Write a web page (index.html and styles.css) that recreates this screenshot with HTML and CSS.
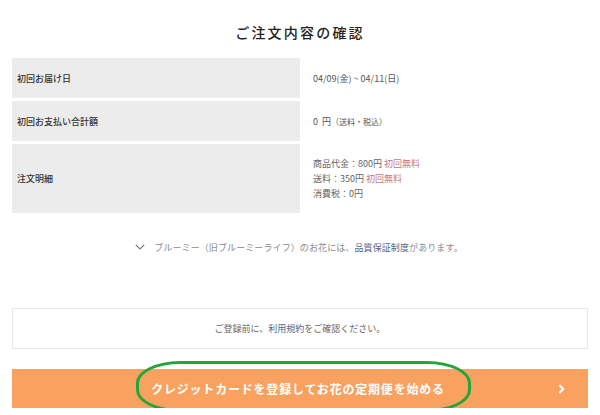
FILE: index.html
```html
<!DOCTYPE html>
<html lang="ja">
<head>
<meta charset="utf-8">
<title>ご注文内容の確認</title>
<link rel="stylesheet" href="styles.css">
</head>
<body>
<main class="page">
  <h1 class="title">ご注文内容の確認</h1>

  <div class="summary">
    <div class="label">初回お届け日</div>
    <div class="value">04/09(金) ~ 04/11(日)</div>

    <div class="label">初回お支払い合計額</div>
    <div class="value">0&nbsp;&nbsp;円<span class="note">（送料・税込）</span></div>

    <div class="label">注文明細</div>
    <div class="value detail">
      <div>商品代金：800円 <span class="free">初回無料</span></div>
      <div>送料：350円 <span class="free">初回無料</span></div>
      <div>消費税：0円</div>
    </div>
  </div>

  <p class="notice">
    <svg class="chev-down" width="10" height="6" viewBox="0 0 10 6" aria-hidden="true"><path d="M0.8 0.8 L5 5 L9.2 0.8" fill="none" stroke="#777" stroke-width="1.2"/></svg>
    <span>ブルーミー（旧ブルーミーライフ）のお花には、<span class="link">品質保証制度</span>があります。</span>
  </p>

  <div class="terms">ご登録前に、<span class="link">利用規約</span>をご確認ください。</div>

  <div class="cta">
    <span class="cta-text">クレジットカードを登録してお花の定期便を始める</span>
    <svg class="chev-right" width="7" height="10" viewBox="0 0 7 10" aria-hidden="true"><path d="M1.3 1 L5.3 5 L1.3 9" fill="none" stroke="#fff" stroke-width="2"/></svg>
    <div class="annotation"></div>
  </div>
</main>
</body>
</html>
```

FILE: styles.css
```css
* { box-sizing: border-box; }

html, body {
  margin: 0;
  padding: 0;
  background: #fff;
}

body {
  font-family: "Noto Sans CJK JP", "Noto Sans", "Liberation Sans", sans-serif;
  color: #333;
}

.page {
  width: 600px;
  padding: 0 12px;
}

.title {
  margin: 22px 0 16px;
  font-size: 14px;
  line-height: 20px;
  font-weight: 500;
  letter-spacing: 2.2px;
  text-align: center;
  color: #222;
}

.summary {
  display: grid;
  grid-template-columns: 288px 1fr;
  grid-template-rows: 40px 40px 69px;
  row-gap: 3px;
  font-size: 9px;
}

.label {
  background: #ececec;
  display: flex;
  align-items: center;
  padding-left: 5px;
  color: #333;
  font-weight: 500;
}

.value {
  display: flex;
  align-items: center;
  padding-left: 13px;
  color: #555;
}

.value .note {
  font-size: 8px;
}

.value.detail {
  flex-direction: column;
  align-items: flex-start;
  justify-content: center;
  line-height: 15px;
  color: #666;
}

.free {
  color: #c8777e;
}

.notice {
  margin: 27px 0 0;
  height: 14px;
  display: flex;
  align-items: center;
  justify-content: center;
  gap: 9px;
  font-size: 9px;
  color: #8a8a8a;
  letter-spacing: 0.1px;
}

.chev-down {
  display: block;
  margin-left: -2px;
}

.link {
  color: #51668a;
}

.terms {
  margin-top: 54px;
  height: 41px;
  border: 1px solid #e8e8e8;
  display: flex;
  align-items: center;
  justify-content: center;
  font-size: 9px;
  color: #666;
}

.cta {
  position: relative;
  margin-top: 20px;
  height: 39px;
  background: #f9a260;
  display: flex;
  align-items: center;
  justify-content: center;
}

.cta-text {
  color: #fff;
  font-size: 12px;
  font-weight: 700;
  letter-spacing: 0.8px;
  margin-left: -4px;
}

.chev-right {
  position: absolute;
  right: 23px;
  top: 15px;
}

.annotation {
  position: absolute;
  left: 124px;
  top: -8px;
  width: 335px;
  height: 51px;
  border: 3px solid #22a63c;
  border-radius: 44px / 22px;
  pointer-events: none;
}
```
